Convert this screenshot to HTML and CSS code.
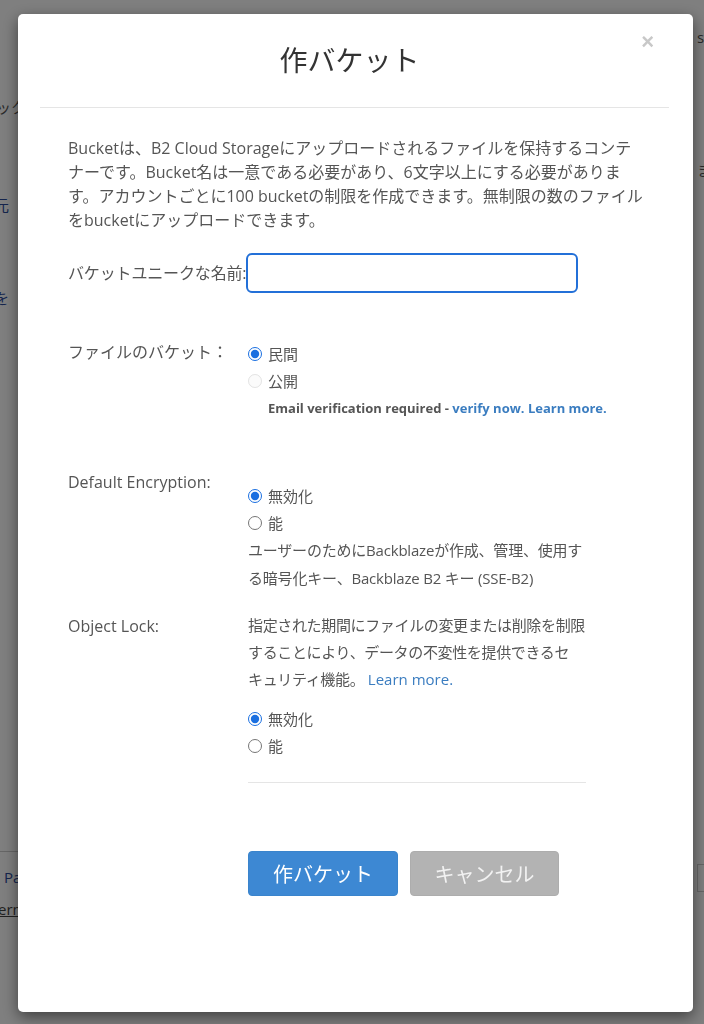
FILE: index.html
```html
<!DOCTYPE html>
<html lang="ja">
<head>
    <meta charset="UTF-8">
    <meta name="viewport" content="width=device-width, initial-scale=1.0">
    <title>作バケット</title>
    <link rel="stylesheet" href="styles.css">
</head>
<body>
    <!-- page behind the dialog, mostly hidden -->
    <div class="page">
        <span class="peek peek-1">ック</span>
        <span class="peek peek-2 blue">元</span>
        <span class="peek peek-3 blue">を</span>
        <span class="peek peek-4 blue">Pa</span>
        <span class="peek peek-5 under">erm</span>
        <span class="peek peek-6">s</span>
        <span class="peek peek-7">ま</span>
        <div class="peek-line"></div>
        <div class="peek-box"></div>
    </div>

    <div class="overlay">
        <div class="modal">
            <div class="modal-header">
                <h2 class="modal-title">作バケット</h2>
                <button class="close" type="button">&times;</button>
            </div>

            <div class="modal-body">
                <p class="intro">Bucketは、B2 Cloud Storageにアップロードされるファイルを保持するコンテナーです。Bucket名は一意である必要があり、6文字以上にする必要があります。アカウントごとに100 bucketの制限を作成できます。無制限の数のファイルをbucketにアップロードできます。</p>

                <div class="row row-name">
                    <label for="bucketName" class="label">バケットユニークな名前:</label>
                    <input id="bucketName" class="text-input" type="text">
                </div>

                <div class="row row-files">
                    <div class="label">ファイルのバケット：</div>
                    <div class="controls">
                        <label class="radio"><input type="radio" name="files" checked> 民間</label>
                        <label class="radio disabled"><input type="radio" name="files" disabled> 公開</label>
                        <div class="verify">Email verification required - <a href="#">verify now.</a> <a href="#">Learn more.</a></div>
                    </div>
                </div>

                <div class="row row-encrypt">
                    <div class="label">Default Encryption:</div>
                    <div class="controls controls-low">
                        <label class="radio"><input type="radio" name="enc" checked> 無効化</label>
                        <label class="radio"><input type="radio" name="enc"> 能</label>
                        <p class="help">ユーザーのためにBackblazeが作成、管理、使用する暗号化キー、Backblaze B2 キー (SSE-B2)</p>
                    </div>
                </div>

                <div class="row row-lock">
                    <div class="label">Object Lock:</div>
                    <div class="controls">
                        <p class="help lock-help">指定された期間にファイルの変更または削除を制限<br>することにより、データの不変性を提供できるセ<br>キュリティ機能。 <a href="#">Learn more.</a></p>
                        <div class="lock-radios">
                            <label class="radio"><input type="radio" name="lock" checked> 無効化</label>
                            <label class="radio"><input type="radio" name="lock"> 能</label>
                        </div>
                        <hr class="divider">
                    </div>
                </div>

                <div class="actions">
                    <button class="btn btn-primary" type="button">作バケット</button>
                    <button class="btn btn-cancel" type="button">キャンセル</button>
                </div>
            </div>
        </div>
    </div>
</body>
</html>
```

FILE: styles.css
```css
body {
    margin: 0;
    font-family: 'Open Sans', 'Noto Sans CJK JP', sans-serif;
    background: #fff;
    color: #555;
    height: 1024px;
    overflow: hidden;
}
.page {
    position: relative;
    height: 1024px;
}
.peek {
    position: absolute;
    font-size: 15px;
    color: #555;
}
.peek.blue { color: #2b4a9a; }
.peek.under { text-decoration: underline; color: #444; }
.peek-1 { left: -4px; top: 96px; }
.peek-2 { left: -6px; top: 194px; }
.peek-3 { left: -6px; top: 287px; }
.peek-4 { left: 4px; top: 867px; }
.peek-5 { left: -2px; top: 899px; }
.peek-6 { left: 697px; top: 27px; }
.peek-7 { left: 697px; top: 159px; }
.peek-line {
    position: absolute;
    left: 0;
    top: 851px;
    width: 20px;
    border-top: 1px solid #ccc;
}
.peek-box {
    position: absolute;
    left: 697px;
    top: 864px;
    width: 20px;
    height: 26px;
    border: 1px solid #ccc;
}
.overlay {
    position: fixed;
    inset: 0;
    background: rgba(0, 0, 0, 0.5);
    padding: 14px 0 0 18px;
}
.modal {
    position: relative;
    width: 675px;
    height: 998px;
    background: #fff;
    border-radius: 5px;
    box-shadow: 0 5px 15px rgba(0, 0, 0, 0.5);
}
.modal-header {
    margin: 0 24px 0 22px;
    height: 93px;
    border-bottom: 1px solid #e5e5e5;
}
.modal-title {
    margin: 0;
    padding: 26px 10px 0 0;
    font-size: 28px;
    line-height: 40px;
    font-weight: normal;
    text-align: center;
    color: #333;
}
.close {
    position: absolute;
    top: 15px;
    right: 39px;
    border: none;
    background: none;
    padding: 0;
    font-family: 'Liberation Sans', sans-serif;
    font-size: 22px;
    font-weight: bold;
    color: #c8c8c8;
    cursor: pointer;
}
.modal-body {
    padding: 0 46px 0 50px;
    font-size: 16px;
}
.intro {
    margin: 28px 0 0;
    line-height: 24px;
}
.row {
    display: flex;
    align-items: flex-start;
}
.label {
    width: 180px;
    flex: none;
    line-height: 24px;
    color: #555;
    white-space: nowrap;
}
.row-name {
    margin-top: 21px;
    align-items: center;
}
.row-name .label {
    width: auto;
    letter-spacing: -0.15px;
}
.text-input {
    width: 332px;
    height: 40px;
    box-sizing: border-box;
    margin: 0;
    border: 2px solid #2370d8;
    border-radius: 6px;
    outline: none;
    font-size: 16px;
    padding: 0 8px;
}
.controls {
    width: 340px;
}
.row-files {
    margin-top: 47px;
}
.row-encrypt {
    margin-top: 48px;
}
.controls-low {
    padding-top: 12px;
}
.row-lock {
    margin-top: 22px;
}
.radio {
    display: flex;
    align-items: center;
    height: 27px;
    color: #555;
    font-size: 15px;
    gap: 2px;
}
.radio input {
    width: 14px;
    height: 14px;
    margin: 0 4px 0 0;
    accent-color: #1a6fe0;
}
.radio.disabled input {
    opacity: 0.6;
}
.verify {
    margin-top: 1px;
    padding-left: 20px;
    font-size: 13px;
    font-weight: bold;
    line-height: 27px;
    color: #555;
    white-space: nowrap;
}
a {
    color: #3b7dc0;
    text-decoration: none;
}
.help {
    margin: 0;
    font-size: 15px;
    line-height: 28px;
    color: #555;
    letter-spacing: -0.2px;
}
.lock-help {
    line-height: 27px;
    margin-top: -2px;
    letter-spacing: -0.35px;
    white-space: nowrap;
}
.lock-help a {
    letter-spacing: 0;
}
.lock-radios {
    margin-top: 12px;
}
.divider {
    margin: 23px 0 0;
    width: 338px;
    border: none;
    border-top: 1px solid #e5e5e5;
}
.actions {
    display: flex;
    gap: 12px;
    margin: 68px 0 0 180px;
}
.btn {
    height: 45px;
    border: 1px solid transparent;
    border-radius: 4px;
    font-family: 'Open Sans', 'Noto Sans CJK JP', sans-serif;
    font-size: 20px;
    color: #fff;
    cursor: pointer;
}
.btn-primary {
    width: 150px;
    background-color: #3d88d3;
    border-color: #3a84cc;
}
.btn-cancel {
    width: 149px;
    background-color: #b3b3b3;
    border-color: #adadad;
    color: #f2f2f2;
}
```
